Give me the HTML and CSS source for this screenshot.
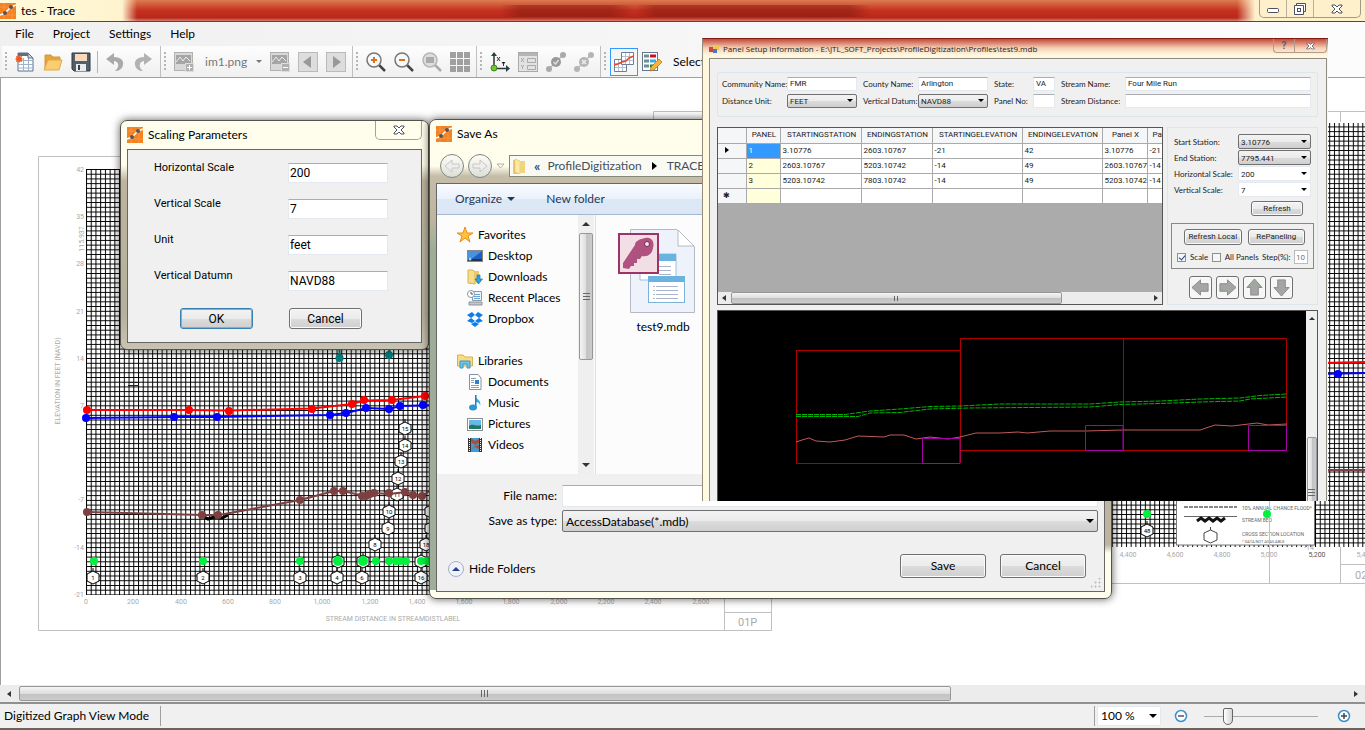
FILE: index.html
```html
<!DOCTYPE html>
<html lang="en">
<head>
  <meta charset="UTF-8" />
  <meta name="viewport" content="width=device-width, initial-scale=1.0"/>
  <title>tes - Trace</title>
  <link rel="stylesheet" href="styles.css">
</head>
<body>
  <!-- shared shapes -->
  <svg class="defs" width="0" height="0">
    <symbol id="logo" viewBox="0 0 16 16">
      <rect width="16" height="16" fill="#f58220"/>
      <path d="M4 0V16M12 0V16M0 4H16M0 12H16" stroke="#f79446" stroke-width="1"/>
      <path d="M0 12L5 10L11 4L16 2" fill="none" stroke="#fff" stroke-width="1.500"/>
      <circle cx="5" cy="10" r="2" fill="#555"/><circle cx="11" cy="4" r="2" fill="#555"/>
    </symbol>
    <symbol id="close" viewBox="0 0 12 10">
      <path d="M1 1H4L6 3L8 1H11V2L8 5L11 8V9H8L6 7L4 9H1V8L4 5L1 2Z" fill="#fff" stroke="#4c5160"/>
    </symbol>
    <symbol id="hex" viewBox="0 0 14 18">
      <path d="M7 0V3M7 3L13 6V13L7 16L1 13V6Z" fill="#fff" stroke="#000" stroke-width="1"/>
    </symbol>
    <symbol id="picture" viewBox="0 0 20 20">
      <rect x=".5" y=".5" width="18" height="18" fill="#d8d8d8" stroke="#b0b0b0"/>
      <rect x="2" y="3" width="15" height="9" fill="#a5a5a5"/>
      <path d="M2 10L6 5L9 9L12 5L16 9" fill="none" stroke="#eee" stroke-width="1"/>
      <rect x="11.500" y="11.500" width="8" height="8" fill="#b0b0b0" stroke="#ddd"/>
    </symbol>
    <symbol id="arrow" viewBox="0 0 20 20">
      <path d="M1 10L10 2V6H18V14H10V18Z" fill="#a3a7a2" stroke="#8a8a8a"/>
    </symbol>
  </svg>

  <div class="app">
    <header class="titlebar">
      <svg class="logo"><use href="#logo"/></svg>
      <h1>tes - Trace</h1>
      <div class="caption-buttons">
        <button aria-label="Minimize"><svg width="14" height="10"><rect x="1.500" y="4.500" width="11" height="4" rx="1" fill="#fff" stroke="#4c5160"/></svg></button>
        <button aria-label="Restore"><svg width="14" height="12"><path d="M3.500 .5H12.500V8.500H3.500Z" fill="#fff" stroke="#4c5160"/><path d="M1.500 2.500H10.500V11.500H1.500Z" fill="#fff" stroke="#4c5160"/><rect x="4.500" y="5.500" width="3" height="3" fill="none" stroke="#4c5160"/></svg></button>
        <button class="wide" aria-label="Close"><svg width="12" height="10"><use href="#close"/></svg></button>
      </div>
    </header>

    <nav class="menubar">
      <button>File</button>
      <button>Project</button>
      <button>Settings</button>
      <button>Help</button>
    </nav>

    <div class="toolbar">
      <div class="group">
        <button class="tool" aria-label="New">
          <svg viewBox="0 0 20 20"><path d="M3 1H13L18 6V19H3Z" fill="#fff" stroke="#5c6f8c"/><path d="M3 1H13V4H3Z" fill="#666d78"/><path d="M3 8.500H18M3 12.500H18M3 16H18M8.500 6V19M13.500 6V19" stroke="#9fb2cc"/><path d="M13 1V6H18Z" fill="#cfd8e5" stroke="#5c6f8c"/><path d="M4 3L5 4.500L7 4L6.500 6L8 7L6.500 8L7 10L5 9.500L4 11L3 9.500L1 10L1.500 8L0 7L1.500 6L1 4L3 4.500Z" fill="#ee5a1c"/></svg>
        </button>
        <button class="tool" aria-label="Open">
          <svg viewBox="0 0 20 20"><path d="M2 18V3H8L10 5H17V8" fill="#e3a33d" stroke="#d59a3a"/><path d="M1 18L5 8H19L16 18Z" fill="#f9cd70" stroke="#e0a94a"/></svg>
        </button>
        <button class="tool" aria-label="Save">
          <svg viewBox="0 0 20 20"><path d="M1 1H19V19H3L1 17Z" fill="#51606b" stroke="#2d3a42"/><rect x="4" y="2" width="12" height="7" fill="#f9d9bd"/><rect x="5" y="12" width="10" height="7" fill="#e8ecee"/><rect x="7" y="13" width="2" height="5" fill="#37444d"/></svg>
        </button>
        <span class="sep"></span>
        <button class="tool" aria-label="Undo">
          <svg viewBox="0 0 20 20"><path d="M0 7L8 1V5C15 5 18 9 17 13C16 17 13 19 9 19C13 16 14 10 8 9V13Z" fill="#aaa"/></svg>
        </button>
        <button class="tool" aria-label="Redo">
          <svg viewBox="0 0 20 20"><path d="M18 7L10 1V5C3 5 0 9 1 13C2 17 5 19 9 19C5 16 4 10 10 9V13Z" fill="#b2b2b2"/></svg>
        </button>
      </div>
      <div class="group">
        <button class="tool" aria-label="Add image"><svg viewBox="0 0 20 20"><use href="#picture"/><path d="M13 15.500H18M15.500 13V18" stroke="#fff"/></svg></button>
        <button class="image-name">im1.png <i class="caret"></i></button>
        <button class="tool" aria-label="Remove image"><svg viewBox="0 0 20 20"><use href="#picture"/><path d="M13 15.500H18" stroke="#fff"/></svg></button>
        <button class="tool" aria-label="Previous"><svg viewBox="0 0 20 20"><rect x=".5" y=".5" width="19" height="19" fill="#ddd" stroke="#bbb"/><path d="M13 4V16L5 10Z" fill="#999"/></svg></button>
        <button class="tool" aria-label="Next"><svg viewBox="0 0 20 20"><rect x=".5" y=".5" width="19" height="19" fill="#ddd" stroke="#bbb"/><path d="M7 4V16L15 10Z" fill="#999"/></svg></button>
      </div>
      <div class="group">
        <button class="tool" aria-label="Zoom in"><svg viewBox="0 0 20 20"><path d="M13 13L19 19" stroke="#444" stroke-width="2.500"/><circle cx="8" cy="8" r="7" fill="#f8f8f8" stroke="#777" stroke-width="1.500"/><path d="M5 8H11M8 5V11" stroke="#d9721f" stroke-width="2"/></svg></button>
        <button class="tool" aria-label="Zoom out"><svg viewBox="0 0 20 20"><path d="M13 13L19 19" stroke="#444" stroke-width="2.500"/><circle cx="8" cy="8" r="7" fill="#f8f8f8" stroke="#777" stroke-width="1.500"/><path d="M5 8H11" stroke="#d9721f" stroke-width="2"/></svg></button>
        <button class="tool" aria-label="Zoom to fit"><svg viewBox="0 0 20 20"><path d="M13 13L19 19" stroke="#aaa" stroke-width="2.500"/><circle cx="8" cy="8" r="7" fill="#ddd" stroke="#b5b5b5" stroke-width="1.500"/><rect x="4" y="5" width="8" height="6" fill="#aaa"/></svg></button>
        <button class="tool" aria-label="Tiles"><svg viewBox="0 0 20 20" fill="#a0a0a0"><path d="M0 0H6V6H0ZM7 0H13V6H7ZM14 0H20V6H14ZM0 7H6V13H0ZM7 7H13V13H7ZM14 7H20V13H14ZM0 14H6V20H0ZM7 14H13V20H7ZM14 14H20V20H14Z"/></svg></button>
      </div>
      <div class="group">
        <button class="tool" aria-label="Axes"><svg viewBox="0 0 20 20"><path d="M4 16V3M4 16.500H17" stroke="#333" stroke-width="1.500"/><path d="M4 0L7 4H1ZM20 16.500L16 13V20Z" fill="#24424a"/><circle cx="4" cy="16" r="3" fill="#6fc52b" stroke="#3c8a17"/><path d="M7 5L10 9M10 5L7 9M12 10L13.500 12L15 10M13.500 12V14" stroke="#333"/></svg></button>
        <button class="tool" aria-label="Form"><svg viewBox="0 0 20 20"><rect x=".5" y=".5" width="19" height="19" fill="#e2e2e2" stroke="#aaa"/><rect x="1" y="1" width="18" height="3" fill="#b5b5b5"/><path d="M3 6L6 10M6 6L3 10M3 13L4.500 15L6 13M4.500 15V17M9.500 6.500H17.500V10.500H9.500ZM9.500 13.500H17.500V17.500H9.500Z" fill="none" stroke="#aaa"/></svg></button>
        <button class="tool" aria-label="Accept points"><svg viewBox="0 0 20 20"><path d="M3 17L17 3" stroke="#bbb" stroke-width="1.500"/><circle cx="3" cy="17" r="3" fill="#aaa"/><circle cx="17" cy="3" r="3" fill="#aaa"/><circle cx="10" cy="10" r="5" fill="#999"/><path d="M7.500 10L9.500 12L12.500 8" fill="none" stroke="#ddd" stroke-width="1.500"/></svg></button>
        <button class="tool" aria-label="Delete points"><svg viewBox="0 0 20 20"><path d="M3 17L17 3" stroke="#bbb" stroke-width="1.500"/><circle cx="3" cy="17" r="3" fill="#b5b5b5"/><circle cx="17" cy="3" r="3" fill="#b5b5b5"/><circle cx="10" cy="10" r="5" fill="#b5b5b5"/><path d="M8 8L12 12M12 8L8 12" stroke="#eee" stroke-width="1.500"/></svg></button>
      </div>
      <div class="group last">
        <button class="tool checked" aria-label="Graph view"><svg viewBox="0 0 20 20"><path d="M.5 7.500H12.500V19.500H.5Z" fill="#fff" stroke="#6b7d99"/><path d="M4.500 8V19M8.500 8V19M1 11.500H12M1 15.500H12" stroke="#b3c0d2"/><path d="M7.500 .5H19.500V12.500H7.500Z" fill="#fff" stroke="#6b7d99"/><path d="M11.500 1V12M15.500 1V12M8 4.500H19M8 8.500H19" stroke="#b3c0d2"/><path d="M0 13L4 12L8 10L12 9L15 6L20 4" fill="none" stroke="#e8452c" stroke-width="1.500"/></svg></button>
        <button class="tool" aria-label="Edit table"><svg viewBox="0 0 20 20"><rect x=".5" y=".5" width="15" height="18" fill="#fff" stroke="#66788f"/><path d="M2 4H7M2 9H7M2 14H7" stroke="#6a9090" stroke-width="3"/><path d="M8 4H14" stroke="#c8102e" stroke-width="3"/><path d="M8 9H14" stroke="#38aadd" stroke-width="3"/><path d="M8 14H12" stroke="#287a40" stroke-width="3"/><path d="M8 19L9 15L17 7L20 10L12 18Z" fill="#f9b233" stroke="#a86f1c" stroke-width=".7"/></svg></button>
        <span class="tool-text">Select</span>
      </div>
    </div>

    <main class="canvas">
      <svg class="profile" viewBox="1 78 1364 607" preserveAspectRatio="xMinYMin slice">
        <defs>
          <pattern id="grid" x="86" y="169" width="4.727" height="4.727" patternUnits="userSpaceOnUse">
            <path d="M0 .5H5M.5 0V5" stroke="#000" stroke-width="1"/>
          </pattern>
        </defs>
        <!-- sheet frames -->
        <g fill="none" stroke="#c0c0c0">
          <path d="M38.500 156.500H771.500V630.500H38.500ZM724.500 590V630M724.500 612.500H771.500"/>
          <path d="M653.500 200V111.500H1365M1340.500 111V122M1100 583.500H1365"/>
        </g>
        <rect x="86" y="169" width="614" height="426" fill="url(#grid)"/>
        <rect x="1100" y="123" width="265" height="424" fill="url(#grid)"/>

        <g class="ticks" text-anchor="end">
          <text x="84" y="172">42</text><text x="84" y="219">35</text><text x="84" y="266">28</text>
          <text x="84" y="314">21</text><text x="84" y="361">14</text><text x="84" y="408">7</text>
          <text x="84" y="502">-7</text><text x="84" y="550">-14</text><text x="84" y="597">-21</text>
        </g>
        <g class="ticks" text-anchor="middle">
          <text x="86" y="604">0</text><text x="133" y="604">200</text><text x="181" y="604">400</text>
          <text x="228" y="604">600</text><text x="275" y="604">800</text><text x="322" y="604">1,000</text>
          <text x="370" y="604">1,200</text><text x="417" y="604">1,400</text><text x="464" y="604">1,600</text>
          <text x="511" y="604">1,800</text><text x="559" y="604">2,000</text><text x="606" y="604">2,200</text>
          <text x="653" y="604">2,400</text><text x="701" y="604">2,600</text>
          <text x="393" y="621">STREAM DISTANCE IN STREAMDISTLABEL</text>
          <text transform="translate(60 381) rotate(-90)">ELEVATION IN FEET (NAVD)</text>
          <text transform="translate(84 239) rotate(-90)">115.937</text>
          <text x="1128" y="557">4,400</text><text x="1175" y="557">4,600</text><text x="1222" y="557">4,800</text>
          <text x="1269" y="557">5,000</text><text x="1317" y="557" class="dark">5,200</text><text x="1365" y="557">5,400</text>
          <text x="1309" y="550">-14</text>
        </g>
        <g class="sheet-no"><text x="738" y="626">01P</text><text x="1355" y="579">02P</text></g>

        <!-- flood profiles -->
        <path d="M339.500 340V358M389.500 340V356" stroke="#007c7c" stroke-width="2"/>
        <g fill="#007c7c"><circle cx="339.500" cy="358" r="4"/><circle cx="389" cy="355" r="4"/></g>
        <path d="M129 382.500H138M128 385.500H139" stroke="#222"/>
        <path d="M87 410L189 410L229 410.500L312 408.500L352 404L364 400.500L392 400L425 396H440" fill="none" stroke="#f00" stroke-width="2"/>
        <g fill="#f00"><circle cx="87" cy="410" r="4"/><circle cx="189" cy="410" r="4"/><circle cx="229" cy="411" r="4"/><circle cx="312" cy="409" r="4"/><circle cx="352" cy="404" r="4"/><circle cx="364" cy="400" r="4"/><circle cx="392" cy="400" r="4"/><circle cx="425" cy="396" r="4"/></g>
        <path d="M86 418L174 417L217 417L330 415L346 413L367 408L389 409L400 406L440 405" fill="none" stroke="#00f" stroke-width="2"/>
        <g fill="#00f"><circle cx="86" cy="418" r="4"/><circle cx="174" cy="417" r="4"/><circle cx="217" cy="417" r="4"/><circle cx="330" cy="415" r="4"/><circle cx="346" cy="413" r="4"/><circle cx="366" cy="408" r="4"/><circle cx="389" cy="409" r="4"/><circle cx="400" cy="406" r="4"/><circle cx="423" cy="405" r="4"/></g>

        <!-- cross section markers -->
        <g>
          <use href="#hex" x="86" y="568" width="14" height="18"/><use href="#hex" x="196" y="568" width="14" height="18"/>
          <use href="#hex" x="293" y="568" width="14" height="18"/><use href="#hex" x="330" y="568" width="14" height="18"/>
          <use href="#hex" x="355" y="568" width="14" height="18"/><use href="#hex" x="414" y="568" width="14" height="18"/>
          <use href="#hex" x="331" y="552" width="14" height="18"/><use href="#hex" x="356" y="552" width="14" height="18"/>
          <use href="#hex" x="414" y="552" width="14" height="18"/><use href="#hex" x="368" y="535" width="14" height="18"/>
          <use href="#hex" x="381" y="519" width="14" height="18"/><use href="#hex" x="382" y="502" width="14" height="18"/>
          <use href="#hex" x="390" y="485" width="14" height="18"/><use href="#hex" x="391" y="469" width="14" height="18"/>
          <use href="#hex" x="394" y="452" width="14" height="18"/><use href="#hex" x="398" y="436" width="14" height="18"/>
          <use href="#hex" x="398" y="419" width="14" height="18"/><use href="#hex" x="419" y="535" width="14" height="18"/>
          <use href="#hex" x="424" y="519" width="14" height="18"/><use href="#hex" x="424" y="502" width="14" height="18"/>
          <use href="#hex" x="1140" y="521" width="14" height="18"/>
        </g>
        <g class="marks" text-anchor="middle">
          <text x="93" y="580">1</text><text x="203" y="580">2</text><text x="300" y="580">3</text><text x="337" y="580">4</text>
          <text x="362" y="580">6</text><text x="421" y="580">16</text><text x="375" y="547">8</text><text x="388" y="531">9</text>
          <text x="389" y="514">10</text><text x="397" y="497">11</text><text x="398" y="481">12</text><text x="401" y="464">13</text>
          <text x="405" y="448">14</text><text x="405" y="431">15</text><text x="426" y="547">18</text><text x="1147" y="533">48</text>
        </g>

        <!-- stream bed -->
        <path d="M203 516L208 519L214 517L222 518L228 515" fill="none" stroke="#000" stroke-width="3"/>
        <path d="M87 512L203 515L219 515L300 500L334 491L343 491L364 496L374 493L389 494L406 492L413 495L422 496L440 484" fill="none" stroke="#7d3f3f" stroke-width="2"/>
        <g fill="#7d3f3f"><circle cx="87" cy="512" r="4"/><circle cx="202" cy="515" r="4"/><circle cx="218" cy="515" r="4"/><circle cx="300" cy="500" r="4"/><circle cx="334" cy="491" r="4"/><circle cx="343" cy="491" r="4"/><circle cx="362" cy="496" r="4"/><circle cx="366" cy="496" r="4"/><circle cx="370" cy="494" r="4"/><circle cx="374" cy="493" r="4"/><circle cx="389" cy="493" r="4"/><circle cx="405" cy="492" r="4"/><circle cx="413" cy="495" r="4"/><circle cx="422" cy="496" r="4"/></g>
        <g fill="#00f23c"><circle cx="94" cy="561" r="4"/><circle cx="203" cy="561" r="4"/><circle cx="300" cy="561" r="4"/><circle cx="338" cy="561" r="5"/><circle cx="363" cy="561" r="5"/><circle cx="376" cy="561" r="4"/><circle cx="389" cy="561" r="4"/><circle cx="396" cy="561" r="4"/><circle cx="400" cy="561" r="4"/><circle cx="406" cy="561" r="4"/><circle cx="421" cy="561" r="4"/><circle cx="427" cy="561" r="4"/><circle cx="1147" cy="514" r="4"/></g>

        <path d="M1320 363L1365 362" stroke="#f00" stroke-width="2"/>
        <path d="M1320 374L1365 373" stroke="#00f" stroke-width="2"/><circle cx="1338" cy="374" r="4" fill="#00f"/>
        <path d="M1320 470H1365" stroke="#7d3f3f" stroke-width="2"/>

        <!-- legend -->
        <rect x="1176.500" y="480" width="138" height="65" fill="#fff" stroke="#777"/>
        <path d="M1184 507H1237" stroke="#888" stroke-width="2" stroke-dasharray="4 1"/>
        <path d="M1184 516.500H1237" stroke="#666"/>
        <path d="M1197 521L1201 518L1205 521L1209 518L1213 521L1217 518L1221 521L1225 518" fill="none" stroke="#111" stroke-width="3"/>
        <path d="M1210.500 527V530L1217 533V540L1210.500 543L1204 540V533L1210.500 530" fill="#fff" stroke="#444"/>
        <g class="legend"><text x="1242" y="510">10% ANNUAL CHANCE FLOOD*</text><text x="1242" y="522">STREAM BED</text><text x="1242" y="536">CROSS SECTION LOCATION</text><text x="1242" y="543" class="note">* DATA NOT AVAILABLE</text></g>
        <path d="M1269.500 501V583M1340.500 547V583M1340 564.500H1365" stroke="#c0c0c0"/>
        <circle cx="1267" cy="514" r="4" fill="#00f23c"/>
      </svg>
    </main>

    <div class="hscroll">
      <i class="arrow-left"></i><span class="thumb"></span><i class="arrow-right"></i>
    </div>
    <footer class="status">
      <span class="mode">Digitized Graph View Mode</span>
      <div class="zoom">
        <span class="select flat"><select aria-label="Zoom"><option>100 %</option></select></span>
        <button aria-label="Zoom out"><svg width="14" height="14"><circle cx="7" cy="7" r="5.500" fill="#fff" stroke="#3a8fce" stroke-width="1.500"/><path d="M4 7H10" stroke="#555" stroke-width="1.500"/></svg></button>
        <input type="range" min="0" max="100" value="18" aria-label="Zoom level">
        <button aria-label="Zoom in"><svg width="14" height="14"><circle cx="7" cy="7" r="5.500" fill="#fff" stroke="#3a8fce" stroke-width="1.500"/><path d="M4 7H10M7 4V10" stroke="#444" stroke-width="1.500"/></svg></button>
      </div>
    </footer>
  </div>

  <!-- Scaling Parameters -->
  <section class="window scaling">
    <header><svg class="logo"><use href="#logo"/></svg><h2>Scaling Parameters</h2>
      <button class="close" aria-label="Close"><svg width="12" height="10"><use href="#close"/></svg></button></header>
    <form class="client">
      <div class="field"><label for="hs">Horizontal Scale</label><input id="hs" type="text" value="200"></div>
      <div class="field"><label for="vs">Vertical Scale</label><input id="vs" type="text" value="7"></div>
      <div class="field"><label for="unit">Unit</label><input id="unit" type="text" value="feet"></div>
      <div class="field"><label for="datum">Vertical Datumn</label><input id="datum" type="text" value="NAVD88"></div>
      <div class="actions"><button type="button" class="btn default">OK</button><button type="button" class="btn">Cancel</button></div>
    </form>
  </section>

  <!-- Save As -->
  <section class="window saveas">
    <header><svg class="logo"><use href="#logo"/></svg><h2>Save As</h2></header>
    <div class="address">
      <button class="nav" aria-label="Back"><svg width="16" height="16"><path d="M1 8L8 2V6H15V10H8V14Z" fill="#eee" stroke="#c5c9c6"/></svg></button>
      <button class="nav" aria-label="Forward"><svg width="16" height="16"><path d="M15 8L8 2V6H1V10H8V14Z" fill="#eee" stroke="#c5c9c6"/></svg></button>
      <svg width="9" height="6"><path d="M1 1H8L4.500 5Z" fill="#fff" stroke="#b5b29c"/></svg>
      <div class="crumbs">
        <svg width="16" height="16"><path d="M2 2H8V16H2Z" fill="#e9c96c"/><path d="M4 1L9 3V16L4 14Z" fill="#fbeaa6" stroke="#dcb95c" stroke-width=".5"/><path d="M9 3H14V15H9Z" fill="#f0d57e"/></svg>
        <b>«</b><span>ProfileDigitization</span><i class="next"></i><span>TRACE_OUTPUT</span>
      </div>
    </div>
    <div class="client">
      <div class="commands"><button>Organize <i class="caret"></i></button><button>New folder</button></div>
      <div class="browser">
        <nav class="places">
          <a href="#" class="root"><svg viewBox="0 0 16 16"><path d="M8 0L10 6H16L11 9L13 15L8 11L3 15L5 9L0 6H6Z" fill="#fdc433" stroke="#ee8a1e"/></svg>Favorites</a>
          <a href="#"><svg viewBox="0 0 16 16"><rect x=".5" y="2.500" width="15" height="11" fill="#1d5fc4" stroke="#888"/><path d="M1 3H15L6 10H1Z" fill="#4a91e0"/><rect x="1" y="11" width="14" height="2" fill="#333"/><circle cx="3" cy="11" r="1.500" fill="#7fe0ff"/></svg>Desktop</a>
          <a href="#"><svg viewBox="0 0 16 16"><path d="M1 1H6L8 3V15L1 14Z" fill="#f6dd8a" stroke="#d9b14f"/><path d="M8 2H12V14H8Z" fill="#ecc966"/><path d="M10 6H13V10H15.500L11.500 15L8 10H10Z" fill="#2b9fe8" stroke="#1474b8" stroke-width=".7"/></svg>Downloads</a>
          <a href="#"><svg viewBox="0 0 16 16"><path d="M5.500 1.500H14.500V10.500H5.500Z" fill="#eef4f8" stroke="#8d9aa6"/><path d="M8 4.500H13M7 6.500H13M7 8.500H13" stroke="#6aa5d8"/><path d="M2 12H15V15H2Z" fill="#c2c8cd" stroke="#8d9298"/><circle cx="4" cy="4" r="3.500" fill="#fff" stroke="#8a97a3"/><path d="M4 2V4H6" fill="none" stroke="#555"/></svg>Recent Places</a>
          <a href="#"><svg viewBox="0 0 16 16" fill="#0d7ee8"><path d="M5 1L8 4L4 7L0 4ZM11 1L16 4L12 7L8 4ZM4 7L8 10L5 12L0 10ZM12 7L16 10L11 12L8 10ZM4 13L8 11L12 13L8 16Z"/></svg>Dropbox</a>
          <a href="#" class="root gap"><svg viewBox="0 0 16 16"><path d="M.5 2H6L8 4H15.500V13H.5Z" fill="#f6dc83" stroke="#d9b14f"/><path d="M3 15V8H13V15H10V11H6V15Z" fill="#6ec3e8" stroke="#3e95c2"/></svg>Libraries</a>
          <a href="#"><svg viewBox="0 0 16 16"><path d="M2.500 .5H11L14 4V15.500H2.500Z" fill="#fff" stroke="#8392a0"/><path d="M4 4.500H9M4 6.500H7M4 8.500H7M4 11.500H12M4 13.500H12" stroke="#8aa0b5"/><rect x="8" y="6" width="4" height="4" fill="#2e7fd0"/></svg>Documents</a>
          <a href="#"><svg viewBox="0 0 16 16"><path d="M8 1C9 4 15 5 13 11C13 8 11 7 9 7V13" fill="#41a9e0"/><path d="M8 0H9.500V13H8Z" fill="#1c7fc0"/><ellipse cx="6" cy="12.500" rx="4" ry="3" fill="#2b95d6"/></svg>Music</a>
          <a href="#"><svg viewBox="0 0 16 16"><rect x=".5" y="2.500" width="15" height="12" fill="#fff" stroke="#8b8f92"/><rect x="2" y="4" width="12" height="9" fill="#67b7ea"/><path d="M2 10C6 7 9 11 14 9V13H2Z" fill="#1c7a62"/></svg>Pictures</a>
          <a href="#"><svg viewBox="0 0 16 16"><rect x="1" y="1" width="14" height="14" fill="#333"/><rect x="4" y="1" width="8" height="14" fill="#3f9ad8"/><path d="M4 1L8 4L12 2V6L8 8L4 5ZM4 13L8 10L12 12V8L8 9Z" fill="#a85035"/><path d="M2.500 1V15M13.500 1V15" stroke="#fff" stroke-dasharray="1 1"/></svg>Videos</a>
        </nav>
        <div class="vscroll"><i class="up"></i><span class="thumb"></span><i class="down"></i></div>
        <div class="files">
          <figure>
            <svg width="78" height="86" viewBox="0 0 78 86">
              <path d="M12.500 1.500H59L76.500 19V84.500H12.500Z" fill="#edf2fb" stroke="#b5bac2"/>
              <path d="M60 2V18H76Z" fill="#fff" stroke="#b5bac2"/>
              <path d="M22 26H58V52H22Z" fill="#fff" stroke="#9fc0dd"/><path d="M22 26H58V33H22Z" fill="#6ab2df"/>
              <path d="M41 38.500H53M41 42.500H53M41 46.500H53" stroke="#aab2cc"/>
              <rect x="30.500" y="48.500" width="36" height="26" fill="#fff" stroke="#7fb2da"/><path d="M30 48H67V54H30Z" fill="#6ab2df"/>
              <path d="M35 58.500H60M35 62.500H60M35 66.500H60M35 70.500H60" stroke="#aab2cc" stroke-dasharray="2 1 22 0"/>
              <rect x="1" y="6" width="39" height="39" fill="#f2dfe6" stroke="#9c3566" stroke-width="2"/>
              <path d="M17 17C17 13 22 11 27 10C33 9 37 13 35 20C34 26 30 29 24 28L22 31H19V35H16V38H13L11 41L5 40V35Z" fill="#b0527f"/>
              <circle cx="29" cy="16" r="2.500" fill="#f6e4ec" stroke="#7c2450"/>
            </svg>
            <figcaption>test9.mdb</figcaption>
          </figure>
        </div>
      </div>
      <div class="save-fields">
        <label for="fname">File name:</label><input id="fname" type="text">
        <label for="ftype">Save as type:</label><span class="select"><select id="ftype"><option>AccessDatabase(*.mdb)</option></select></span>
      </div>
      <div class="save-actions">
        <button class="hide"><svg width="18" height="18"><circle cx="9" cy="9" r="7.500" fill="#eef2fa" stroke="#a6aecb"/><path d="M5 11L9 7L13 11Z" fill="#26408b"/></svg>Hide Folders</button>
        <button class="btn">Save</button><button class="btn">Cancel</button>
      </div>
      <svg class="resize" width="10" height="10" fill="#bbb"><path d="M8 0H9V1H8ZM4 4H5V5H4ZM8 4H9V5H8ZM0 8H1V9H0ZM4 8H5V9H4ZM8 8H9V9H8Z" stroke="#bbb"/></svg>
    </div>
  </section>

  <!-- Panel Setup Information -->
  <section class="panel-setup">
    <header>
      <svg width="11" height="10"><rect x="0" y="3" width="5" height="5" fill="#c44"/><rect x="4" y="1" width="6" height="5" fill="#f6c64c"/><rect x="4" y="5" width="4" height="4" fill="#4a78c8"/></svg>
      <h2>Panel Setup Information - E:\JTL_SOFT_Projects\ProfileDigitization\Profiles\test9.mdb</h2>
      <div class="mini-caption"><button aria-label="Help">?</button><button class="x" aria-label="Close"><svg width="9" height="8" viewBox="0 0 12 10"><use href="#close"/></svg></button></div>
    </header>
    <div class="panel-body">
      <form class="info">
        <label for="community">Community Name:</label><input id="community" type="text" value="FMR">
        <label for="county">County Name:</label><input id="county" type="text" value="Arlington">
        <label for="state">State:</label><input id="state" type="text" value="VA">
        <label for="stream">Stream Name:</label><input id="stream" type="text" value="Four Mile Run">
        <label for="dunit">Distance Unit:</label><span class="select"><select id="dunit"><option>FEET</option></select></span>
        <label for="vdatum">Vertical Datum:</label><span class="select"><select id="vdatum"><option>NAVD88</option></select></span>
        <label for="pno">Panel No:</label><input id="pno" type="text">
        <label for="sdist">Stream Distance:</label><input id="sdist" type="text">
      </form>
      <div class="middle">
        <div class="datagrid">
          <table>
            <colgroup><col class="c-mark"><col class="c-panel"><col class="c-ss"><col class="c-es"><col class="c-se"><col class="c-ee"><col class="c-x"><col class="c-x"></colgroup>
            <thead><tr><th></th><th>PANEL</th><th>STARTINGSTATION</th><th>ENDINGSTATION</th><th>STARTINGELEVATION</th><th>ENDINGELEVATION</th><th>Panel X</th><th class="left">Panel Y</th></tr></thead>
            <tbody>
              <tr><th><i class="current"></i></th><td class="selected">1</td><td>3.10776</td><td>2603.10767</td><td>-21</td><td>42</td><td>3.10776</td><td>-21</td></tr>
              <tr><th></th><td>2</td><td>2603.10767</td><td>5203.10742</td><td>-14</td><td>49</td><td>2603.10767</td><td>-14</td></tr>
              <tr><th></th><td>3</td><td>5203.10742</td><td>7803.10742</td><td>-14</td><td>49</td><td>5203.10742</td><td>-14</td></tr>
              <tr><th>✱</th><td></td><td></td><td></td><td></td><td></td><td></td><td></td></tr>
            </tbody>
          </table>
          <div class="hscroll small"><i class="arrow-left"></i><span class="thumb"></span><i class="arrow-right"></i></div>
        </div>
        <form class="options">
          <div class="opt"><label for="start">Start Station:</label><span class="select"><select id="start"><option>3.10776</option></select></span></div>
          <div class="opt"><label for="end">End Station:</label><span class="select"><select id="end"><option>7795.441</option></select></span></div>
          <div class="opt"><label for="hscale">Horizontal Scale:</label><span class="select flat"><select id="hscale"><option>200</option></select></span></div>
          <div class="opt"><label for="vscale">Vertical Scale:</label><span class="select flat"><select id="vscale"><option>7</option></select></span></div>
          <button type="button" class="btn refresh">Refresh</button>
          <div class="local">
            <div class="local-buttons"><button type="button" class="btn">Refresh Local</button><button type="button" class="btn">RePaneling</button></div>
            <div class="checks">
              <label><input type="checkbox" checked>Scale</label>
              <label><input type="checkbox">All Panels</label>
              <label for="step">Step(%):</label><input id="step" type="text" value="10">
            </div>
          </div>
          <div class="moves">
            <button type="button" class="btn" aria-label="Left"><svg viewBox="0 0 20 20"><use href="#arrow"/></svg></button>
            <button type="button" class="btn" aria-label="Right"><svg viewBox="0 0 20 20"><use href="#arrow" transform="rotate(180 10 10)"/></svg></button>
            <button type="button" class="btn" aria-label="Up"><svg viewBox="0 0 20 20"><use href="#arrow" transform="rotate(90 10 10)"/></svg></button>
            <button type="button" class="btn" aria-label="Down"><svg viewBox="0 0 20 20"><use href="#arrow" transform="rotate(-90 10 10)"/></svg></button>
          </div>
        </form>
      </div>
      <div class="preview">
        <svg viewBox="718 311 589 190" preserveAspectRatio="xMinYMin slice" fill="none">
          <path d="M796.500 350.500H960M796.500 350V463.500H960M960.500 463V338.500H1286.500V451M1123.500 338V450M960 450.500H1286" stroke="#b00000"/>
          <path d="M796 414.500H845L870 411L900 409L930 406.500L960 406L1000 404L1090 404L1120 402L1160 401L1200 399L1240 398L1260 395.500L1287 394" stroke="#00b400" stroke-dasharray="5 1"/>
          <path d="M796 416.500H858L870 413L900 412.500L930 409L970 408L1090 407L1120 404.500L1160 403.500L1200 402L1240 401L1250 399L1287 397" stroke="#00b400" stroke-dasharray="5 1"/>
          <path d="M796 442L802 440L809 438L816 441L830 442L845 440L858 436L884 437L890 435L904 435L916 439L930 437L948 439L960 437L976 433L1000 433L1018 432L1027 433L1050 431L1085 431L1123 430H1200L1215 425L1232 426L1257 423L1268 425L1287 424" stroke="#c05a5a"/>
          <path d="M922.500 438.500H960V463.500H922.500ZM1085.500 425.500H1123V450.500H1085.500ZM1248.500 425.500H1286.500V450.500H1248.500Z" stroke="#a800a8"/>
        </svg>
        <div class="vscroll small"><i class="up"></i><span class="thumb"></span></div>
      </div>
    </div>
  </section>
</body>
</html>
```

FILE: styles.css
```css
:root {
  --face: #f0f0f0;
  --cream: #fffeec;
  --edge: #707070;
  --btn: linear-gradient(#f3f3f3 0%, #ebebeb 50%, #dcdcdc 51%, #cfcfcf 100%);
  --ui: Lato, "Open Sans", sans-serif;
  --forms: Roboto, "Liberation Sans", sans-serif;
}

* {
  box-sizing: border-box;
  margin: 0;
  padding: 0;
}

body {
  font-family: var(--ui);
  font-size: 12px;
  line-height: 16px;
  color: #000;
  background: #fff;
  overflow: hidden;
}

button, input, select {
  font: inherit;
  color: inherit;
}

button {
  border: none;
  background: none;
}

svg { display: block; flex: none; }
h1, h2 { font-size: 12px; font-weight: normal; }
.defs { position: absolute; }
.logo { width: 16px; height: 16px; }

.app {
  display: flex;
  flex-direction: column;
  height: 100vh;
  border-bottom: 2px solid #6b625c;
}

.titlebar {
  display: flex;
  align-items: center;
  height: 22px;
  flex: none;
  gap: 5px;
  border-bottom: 1px solid #5d4341;
  background:
    linear-gradient(90deg, #fffbd9 0, #fff3cf 122px, transparent 137px, transparent calc(100% - 128px), #fdf0cb calc(100% - 110px)),
    linear-gradient(90deg, transparent 500px, rgba(110, 20, 10, 0.4) 520px 610px, transparent 635px, rgba(110, 20, 10, 0.4) 655px 850px, transparent 870px) center / 100% 12px no-repeat,
    linear-gradient(#dc7c50, #c5301f 50%, #b8281b 85%, #d78070);
}

.caption-buttons {
  display: flex;
  align-self: flex-start;
  margin-left: auto;
  margin-right: 4px;
  border: 1px solid #a39a84;
  border-top: none;
  border-radius: 0 0 5px 5px;
}

.caption-buttons button {
  display: flex;
  align-items: center;
  justify-content: center;
  width: 27px;
  height: 17px;
  border-right: 1px solid #b9b09a;
}

.caption-buttons .wide { width: 46px; border: none; }

.menubar {
  display: flex;
  gap: 19px;
  height: 24px;
  flex: none;
  padding-left: 15px;
  background: linear-gradient(90deg, #f0f0f0, #fcfcfc);
}

.toolbar {
  display: flex;
  height: 32px;
  flex: none;
  padding-left: 2px;
  background: linear-gradient(90deg, #f0f0f0, #fcfcfc);
  border-bottom: 1px solid #a0a0a0;
}

.group {
  display: flex;
  align-items: center;
  padding-right: 2px;
  border-right: 1px solid #c0c0c0;
  background: linear-gradient(#fdfdfd, #f0f0f0);
}

.group.last { border: none; background: none; }

.group::before {
  content: "";
  width: 2px;
  height: 20px;
  margin: 0 4px 0 3px;
  background: repeating-linear-gradient(#b5b5b5 0 2px, transparent 2px 4px);
}

.tool {
  width: 28px;
  height: 28px;
  padding: 4px;
}

.tool.checked { padding: 3px; border: 1px solid #3399ff; }
.tool svg { width: 20px; height: 20px; }
.tool-text { padding-left: 7px; }

.sep {
  width: 1px;
  height: 22px;
  margin: 0 4px 0 2px;
  background: #b5b5b5;
}

.image-name {
  display: flex;
  align-items: center;
  justify-content: space-between;
  width: 68px;
  padding: 0 4px 0 7px;
  color: #777;
}

.caret {
  display: inline-block;
  border: 4px solid transparent;
  border-top-color: currentColor;
  border-bottom: none;
}

.image-name .caret { border-width: 3px; border-bottom: none; }

.canvas {
  flex: 1;
  min-height: 0;
  border-left: 1px solid #a0a0a0;
  background: #fff;
  overflow: hidden;
}

.profile {
  width: 100%;
  height: 100%;
  font-family: var(--forms);
}

.ticks { font-size: 7px; fill: #aaa; }
.ticks .dark { fill: #555; }
.sheet-no { font-size: 11px; fill: #aaa; }
.marks { font-size: 6px; fill: #000; }
.legend { font-size: 5px; fill: #666; }
.legend .note { font-size: 4px; }

/* scrollbars */
.hscroll {
  display: flex;
  align-items: center;
  height: 17px;
  flex: none;
  padding: 0 7px;
  background: #ececec;
}

.hscroll .thumb {
  width: 69%;
  height: 15px;
  margin-left: 8px;
  border: 1px solid #979797;
  border-radius: 2px;
  background:
    repeating-linear-gradient(90deg, #666 0 1px, transparent 1px 3px) center / 8px 7px no-repeat,
    linear-gradient(#f4f4f4, #dedede 50%, #c2c2c6 55%, #ccc);
}

.hscroll.small {
  height: 12px;
  padding: 0 4px;
  margin-top: auto;
}

.hscroll.small .thumb {
  width: 76%;
  height: 12px;
  margin-left: 5px;
  background-size: 6px 5px, auto;
}

.arrow-left, .arrow-right {
  border: 3px solid transparent;
  border-right: 4px solid #333;
  border-left: none;
}

.arrow-right {
  margin-left: auto;
  border-left: 4px solid #333;
  border-right: none;
}

.vscroll {
  display: flex;
  flex-direction: column;
  align-items: center;
  width: 16px;
  padding: 7px 0;
  background: #efefef;
}

.vscroll .thumb {
  width: 14px;
  height: 52%;
  margin-top: 7px;
  border: 1px solid #979797;
  border-radius: 2px;
  background:
    repeating-linear-gradient(#666 0 1px, transparent 1px 3px) center / 7px 8px no-repeat,
    linear-gradient(90deg, #f4f4f4, #dedede 50%, #c2c2c6 55%, #ccc);
}

.up, .down {
  border: 4px solid transparent;
  border-bottom-color: #333;
  border-top: none;
}

.down {
  margin-top: auto;
  border-bottom: none;
  border-top: 4px solid #333;
}

.status {
  display: flex;
  align-items: center;
  height: 26px;
  flex: none;
  padding-left: 4px;
  background: var(--face);
  border-top: 2px solid #909090;
}

.mode {
  padding: 2px 11px 2px 0;
  border-right: 1px solid #a0a0a0;
}

.zoom {
  display: flex;
  align-items: center;
  margin-left: auto;
  margin-right: 14px;
  padding-left: 2px;
  border-left: 1px solid #a0a0a0;
}

.zoom .select { width: 64px; height: 20px; margin-right: 13px; }
.zoom button { width: 14px; height: 14px; }

.zoom input {
  appearance: none;
  width: 114px;
  height: 18px;
  margin: 0 19px 0 16px;
  background: linear-gradient(#aaa, #aaa) center / 100% 1px no-repeat;
}

.zoom input::-webkit-slider-thumb {
  appearance: none;
  width: 10px;
  height: 17px;
  border: 1px solid #666;
  border-radius: 2px 2px 5px 5px;
  background: linear-gradient(90deg, #fff, #d5d5d5);
}

/* controls */
input[type="text"] {
  min-width: 0;
  border: 1px solid #e3e9ef;
  border-top-color: #abadb3;
  background: #fff;
}

.select {
  position: relative;
  display: block;
}

.select select {
  appearance: none;
  display: block;
  width: 100%;
  height: 100%;
  padding-left: 3px;
  border: 1px solid var(--edge);
  border-radius: 2px;
  background: var(--btn);
}

.select.flat select { border-color: #e3e9ef; background: #fff; }

.select::after {
  content: "";
  position: absolute;
  right: 4px;
  top: calc(50% - 2px);
  border: 4px solid transparent;
  border-top-color: #000;
  border-bottom: none;
  pointer-events: none;
}

.btn {
  border: 1px solid var(--edge);
  border-radius: 3px;
  background: var(--btn);
  box-shadow: inset 0 0 0 1px #fafafa;
}

.btn.default {
  border-color: #3c7fb1;
  box-shadow: inset 0 0 0 1px #48c8f0;
}

/* floating windows */
.window {
  position: absolute;
  display: flex;
  flex-direction: column;
  padding: 0 6px 6px;
  border: 1px solid #55534b;
  border-radius: 7px;
  box-shadow: 0 0 9px rgba(0, 0, 0, 0.65);
}

.window header {
  display: flex;
  align-items: center;
  gap: 5px;
  height: 28px;
  flex: none;
}

.window .client {
  flex: 1;
  border: 1px solid #666;
  background: var(--face);
}

.scaling {
  left: 120px;
  top: 120px;
  width: 309px;
  height: 230px;
  background: linear-gradient(var(--cream) 44px, #bcb49c 60px, #b6b09c 85%, #c9c3b2);
}

.close {
  display: flex;
  align-items: center;
  justify-content: center;
  align-self: flex-start;
  width: 47px;
  height: 19px;
  margin-left: auto;
  border: 1px solid #a5a294;
  border-top: none;
  border-radius: 0 0 5px 5px;
}

.scaling .client {
  padding: 13px 0 0 26px;
  font-family: var(--forms);
}

.field {
  display: flex;
  height: 36px;
}

.field label {
  width: 134px;
  line-height: 10px;
  font-size: 11px;
}

.field input {
  width: 100px;
  height: 20px;
  padding-left: 1px;
}

.actions {
  display: flex;
  gap: 36px;
  padding: 1px 0 0 26px;
}

.actions .btn { width: 73px; height: 21px; }

.saveas {
  left: 429px;
  top: 119px;
  width: 683px;
  height: 480px;
  background:
    linear-gradient(var(--cream), var(--cream)) right bottom / 100% 8px no-repeat,
    linear-gradient(#bdb5a0 425px, var(--cream) 433px) right top / 7px 100% no-repeat,
    linear-gradient(var(--cream) 46px, #c5bda8 56px, #bdb5a0 100px, #9dad96 130px, #a0ad9b);
}

.address {
  display: flex;
  align-items: center;
  gap: 4px;
  height: 35px;
  flex: none;
  padding-left: 4px;
}

.nav {
  display: flex;
  align-items: center;
  justify-content: center;
  width: 24px;
  height: 24px;
  border: 1px solid #7e8784;
  border-radius: 50%;
  background: linear-gradient(#fdfdf6, #ddded7);
}

.crumbs {
  display: flex;
  align-items: center;
  gap: 7px;
  flex: 1;
  height: 22px;
  padding-left: 1px;
  border: 1px solid #85867c;
  background: #fafaf4;
  color: #444f59;
}

.crumbs b { font-size: 14px; }

.next {
  margin: 0 3px;
  border: 4px solid transparent;
  border-left: 5px solid #000;
  border-right: none;
}

.saveas .client {
  position: relative;
  display: flex;
  flex-direction: column;
}

.commands {
  display: flex;
  gap: 31px;
  height: 31px;
  flex: none;
  padding-left: 18px;
  background: linear-gradient(#fafcff, #e9f1fb 50%, #dde8f6 51%, #dce6f4);
  border-bottom: 1px solid #a5b8d0;
  color: #1e395b;
}

.commands .caret { margin: 0 0 2px 2px; }

.browser {
  display: flex;
  height: 259px;
  flex: none;
  background: #fcfcfc;
}

.places {
  width: 141px;
  padding-top: 9px;
}

.places a {
  display: flex;
  align-items: center;
  gap: 5px;
  height: 21px;
  padding-left: 30px;
  color: inherit;
  text-decoration: none;
}

.places .root { padding-left: 20px; }
.places .gap { margin-top: 21px; }
.places svg { width: 16px; height: 16px; }

.files {
  flex: 1;
  margin-left: 1px;
  padding: 13px 0 0 22px;
  border-left: 1px solid #d5dfec;
}

figure { width: 90px; }
figcaption { width: 90px; padding-top: 5px; text-align: center; }

.save-fields {
  display: grid;
  grid-template-columns: 120px 1fr;
  gap: 3px 5px;
  padding: 11px 6px 0 0;
  line-height: 22px;
  text-align: right;
}

.save-fields input, .save-fields .select { height: 22px; }

.save-actions {
  display: flex;
  align-items: flex-end;
  gap: 14px;
  padding: 22px 18px 0 10px;
}

.save-actions .btn { width: 86px; height: 24px; }

.hide {
  display: flex;
  align-items: center;
  gap: 4px;
  margin-right: auto;
}

.resize {
  position: absolute;
  right: 3px;
  bottom: 3px;
}

/* panel setup */
.panel-setup {
  position: absolute;
  left: 702px;
  top: 38px;
  display: flex;
  flex-direction: column;
  width: 626px;
  height: 463px;
  padding: 0 1px 0 6px;
  overflow: hidden;
  border-top: 1px solid #85180f;
  border-left: 1px solid #948d80;
  background: linear-gradient(#c14a3b, #f5d0b5 9px, #fff8df 16px, #fffbe2);
  font-family: var(--forms);
  font-size: 8px;
  line-height: 10px;
  color: #222;
}

.panel-setup header {
  display: flex;
  align-items: center;
  gap: 3px;
  height: 19px;
  flex: none;
}

.panel-setup h2 {
  font-family: "Open Sans", sans-serif;
  font-size: 8px;
}

.panel-setup label { font-family: var(--ui); }

.mini-caption {
  display: flex;
  align-self: flex-start;
  margin-left: auto;
  border: 1px solid #b39a8c;
  border-top: none;
  border-radius: 0 0 4px 4px;
}

.mini-caption button {
  width: 20px;
  height: 13px;
  font-size: 10px;
  font-weight: bold;
  color: #5c6170;
}

.mini-caption .x {
  display: flex;
  align-items: center;
  justify-content: center;
  width: 32px;
  border-left: 1px solid #b39a8c;
}

.panel-body {
  display: flex;
  flex-direction: column;
  flex: 1;
  min-height: 0;
  gap: 10px;
  padding: 13px 8px 0 7px;
  border: 1px solid #8e8a80;
  border-bottom: none;
  background: var(--face);
}

.info {
  display: grid;
  grid-template-columns: 65px 70px 61px 70px 45px 22px 70px 1fr;
  gap: 3px 0;
  flex: none;
  padding: 4px 6px 8px 4px;
  border: 1px solid #dde6ea;
  border-radius: 2px;
  line-height: 14px;
  white-space: nowrap;
}

.info input, .info .select { height: 14px; }
.info input { padding-left: 2px; }
.info label:not([for="community"]):not([for="dunit"]) { padding-left: 6px; }

.panel-setup .select::after { border-width: 3px; border-bottom: none; }
.panel-setup .select select { padding-left: 2px; }

.middle {
  display: flex;
  gap: 4px;
  height: 178px;
  flex: none;
}

.datagrid {
  display: flex;
  flex-direction: column;
  flex: 1;
  min-width: 0;
  overflow: hidden;
  border: 1px solid #555;
  background: #ababab;
}

table {
  width: 474px;
  table-layout: fixed;
  border-collapse: collapse;
  background: #fff;
}

th, td {
  height: 15px;
  padding-left: 2px;
  border-right: 1px solid #aaa;
  border-bottom: 1px solid #aaa;
  line-height: 10px;
  text-align: left;
  font-weight: normal;
  white-space: nowrap;
}

th { background: #f5f6f8; text-align: center; }
th.left { padding-left: 5px; text-align: left; }
td:nth-child(2) { background: #ffffdc; }
td.selected:nth-child(2) { background: #3399ff; color: #fff; }

.current {
  display: inline-block;
  border: 3px solid transparent;
  border-left: 4px solid #000;
  border-right: none;
}

tbody th { padding-right: 12px; }

.c-mark { width: 28px; }
.c-panel { width: 34px; }
.c-ss { width: 81px; }
.c-es { width: 71px; }
.c-se { width: 90px; }
.c-ee { width: 80px; }
.c-x { width: 45px; }

.options {
  display: flex;
  flex-direction: column;
  width: 151px;
  padding: 6px 3px 0;
  border: 1px solid #dde6ea;
}

.opt {
  display: flex;
  justify-content: space-between;
  height: 16px;
  padding: 0 3px;
  line-height: 16px;
}

.opt .select { width: 73px; height: 15px; }

.refresh {
  align-self: flex-end;
  width: 52px;
  height: 15px;
  margin: 3px 11px 7px 0;
}

.local {
  height: 46px;
  padding: 5px 5px 0;
  border: 1px solid #888;
}

.local-buttons {
  display: flex;
  gap: 6px;
  padding: 0 3px 0 7px;
}

.local-buttons .btn { flex: 1; height: 16px; }

.checks {
  display: flex;
  align-items: center;
  justify-content: space-between;
  margin-top: 5px;
}

.checks label {
  display: flex;
  align-items: center;
  gap: 4px;
}

.checks input[type="text"] { width: 14px; height: 14px; padding-left: 1px; border-color: #bbb; color: #777; }

.checks input[type="checkbox"] {
  appearance: none;
  width: 9px;
  height: 9px;
  border: 1px solid #8e8f8f;
  background: #f6f6f6;
}

.checks input:checked::after {
  content: "";
  display: block;
  width: 3px;
  height: 5px;
  margin-left: 2px;
  border: solid #27408b;
  border-width: 0 1px 1px 0;
  transform: rotate(40deg);
}

.moves {
  display: flex;
  gap: 4px;
  padding: 7px 0 0 18px;
}

.moves .btn { width: 23px; height: 23px; padding: 1px; background: #f6f6f6; }
.moves svg { width: 19px; height: 19px; }

.preview {
  display: flex;
  flex: 1;
  min-height: 0;
  margin-top: -5px;
  overflow: hidden;
  border: 1px solid #555;
  border-bottom: none;
}

.preview > svg {
  flex: 1;
  min-width: 0;
  height: 100%;
  background: #000;
}

.vscroll.small { width: 11px; height: 100%; padding: 6px 0 0; overflow: hidden; }
.vscroll.small .up { border-width: 3px; border-top: none; }
.vscroll.small .thumb { width: 10px; height: 112px; flex: none; margin-top: 117px; }
```
